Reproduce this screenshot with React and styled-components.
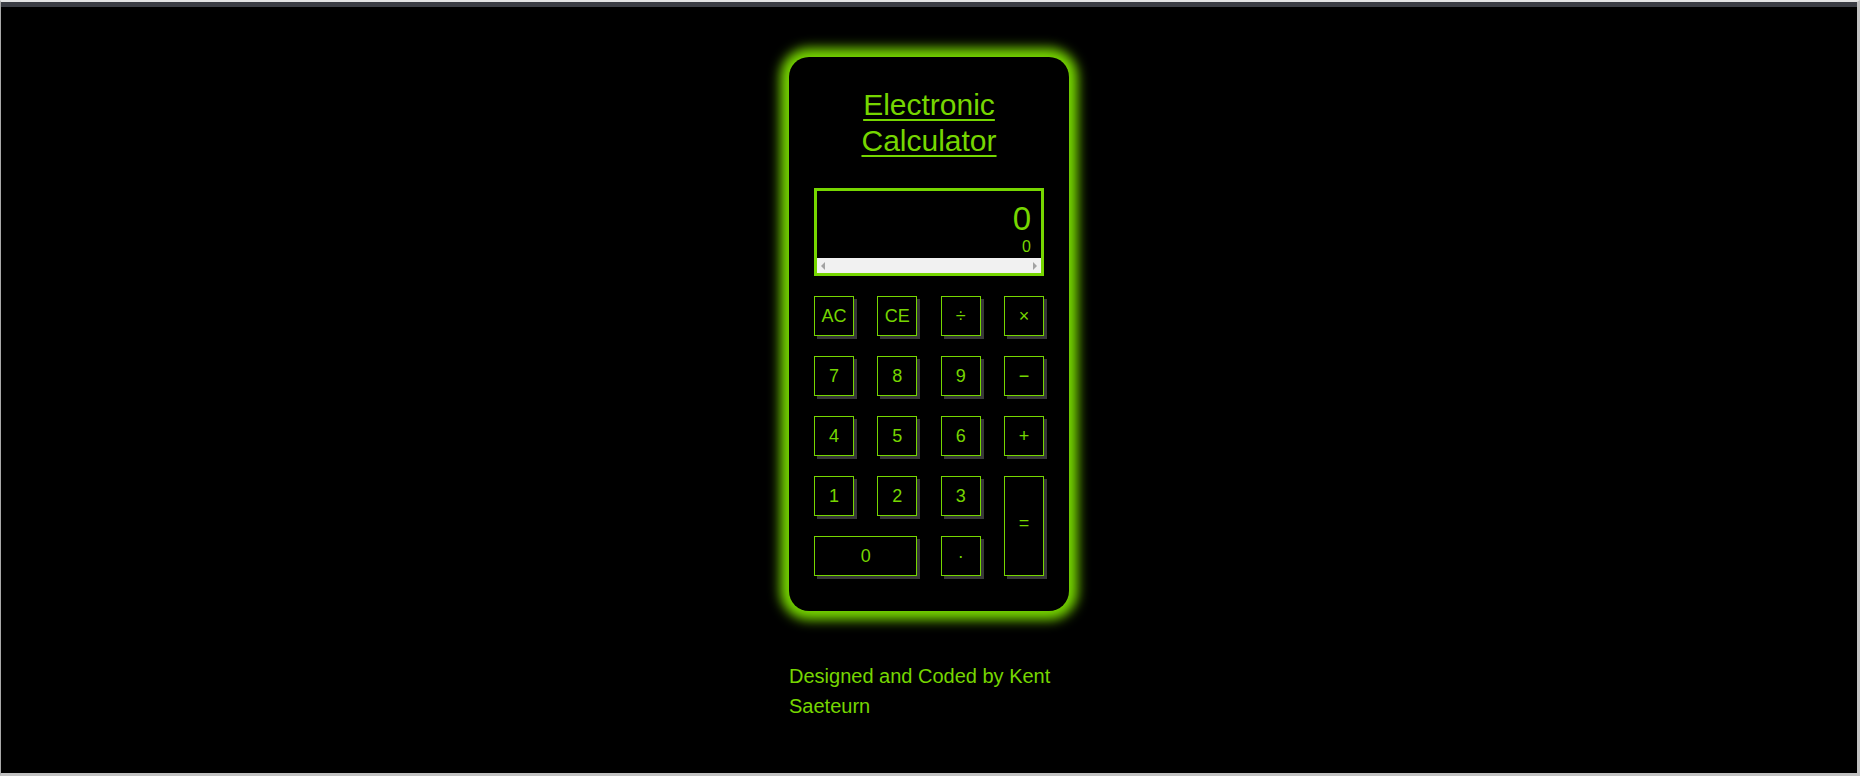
import React from 'react';
import styled, {createGlobalStyle} from 'styled-components';

const GREEN = '#76d600';

const GlobalStyle = createGlobalStyle`
    html, body {
        margin: 0;
        padding: 0;
        background: #c4c4c4;
    }
    body {
        font-family: "Liberation Sans", Arial, sans-serif;
    }
`;

// Outer frame of the preview window
const Frame = styled.div`
    box-sizing: border-box;
    height: 776px;
    background: #000;
    border-top: 2px solid #e4e4e4;
    border-left: 1px solid #a9a9a9;
    border-right: 3px solid #c2c2c2;
    border-bottom: 3px solid #c2c2c2;
    display: flex;
    flex-direction: column;
`;

const TopBar = styled.div`
    height: 5px;
    background: #3b3d44;
`;

const Main = styled.main`
    flex: 1;
    display: flex;
    flex-direction: column;
    align-items: center;
    padding-top: 50px;
`;

// The glowing calculator body
const Card = styled.div`
    box-sizing: border-box;
    width: 280px;
    padding: 30px 25px 35px;
    background: #000;
    border-radius: 20px;
    box-shadow: 0 0 12px 9px ${GREEN};
`;

const Title = styled.h1`
    margin: 0 0 29px;
    font-size: 30px;
    font-weight: normal;
    line-height: 36px;
    text-align: center;
    color: ${GREEN};
    text-decoration: underline;
    text-decoration-thickness: 2px;
    text-underline-offset: 4px;
`;

const Display = styled.div`
    box-sizing: border-box;
    height: 88px;
    border: 3px solid ${GREEN};
    display: flex;
    flex-direction: column;
`;

const Screen = styled.div`
    flex: 1;
    padding: 9px 10px 0;
    text-align: right;
    color: ${GREEN};
`;

const Result = styled.div`
    font-size: 33px;
    line-height: 38px;
`;

const Formula = styled.div`
    font-size: 16px;
    line-height: 18px;
`;

// Fake horizontal scrollbar under the screen
const ScrollTrack = styled.div`
    height: 15px;
    background: #f1f1f1;
    display: flex;
    align-items: center;
    justify-content: space-between;
    padding: 0 4px;
`;

const Arrow = styled.span`
    width: 0;
    height: 0;
    border-top: 4px solid transparent;
    border-bottom: 4px solid transparent;
    ${props => props.dir === 'left'
        ? `border-right: 4px solid #a3a3a3;`
        : `border-left: 4px solid #a3a3a3;`}
`;

const Keys = styled.div`
    margin-top: 20px;
    display: grid;
    grid-template-columns: repeat(4, 40px);
    grid-auto-rows: 40px;
    justify-content: space-between;
    row-gap: 20px;
`;

const Key = styled.button`
    box-sizing: border-box;
    margin: 0;
    padding: 0 0 ${props => props.tall ? '6px' : '0'};
    background: #000;
    border: 1px solid ${GREEN};
    box-shadow: 3px 3px 0 #383838;
    color: ${GREEN};
    font-family: "Liberation Sans", Arial, sans-serif;
    font-size: 18px;
    cursor: pointer;
    grid-column: ${props => props.wide ? 'span 2' : 'auto'};
    grid-row: ${props => props.tall ? 'span 2' : 'auto'};
`;

const Footer = styled.p`
    width: 280px;
    margin: 50px 0 0;
    font-size: 20px;
    line-height: 30px;
    color: ${GREEN};
`;

const KEYS = [
    {label: 'AC'}, {label: 'CE'}, {label: '÷'}, {label: '×'},
    {label: '7'}, {label: '8'}, {label: '9'}, {label: '−'},
    {label: '4'}, {label: '5'}, {label: '6'}, {label: '+'},
    {label: '1'}, {label: '2'}, {label: '3'}, {label: '=', tall: true},
    {label: '0', wide: true}, {label: '·'}
];

export default function App() {
    return (
        <>
            <GlobalStyle/>
            <Frame>
                <TopBar/>
                <Main>
                    <Card>
                        <Title>Electronic Calculator</Title>
                        <Display>
                            <Screen>
                                <Result>0</Result>
                                <Formula>0</Formula>
                            </Screen>
                            <ScrollTrack>
                                <Arrow dir="left"/>
                                <Arrow dir="right"/>
                            </ScrollTrack>
                        </Display>
                        <Keys>
                            {KEYS.map(k =>
                                <Key key={k.label} wide={k.wide} tall={k.tall}>{k.label}</Key>
                            )}
                        </Keys>
                    </Card>
                    <Footer>Designed and Coded by Kent Saeteurn</Footer>
                </Main>
            </Frame>
        </>
    );
}
